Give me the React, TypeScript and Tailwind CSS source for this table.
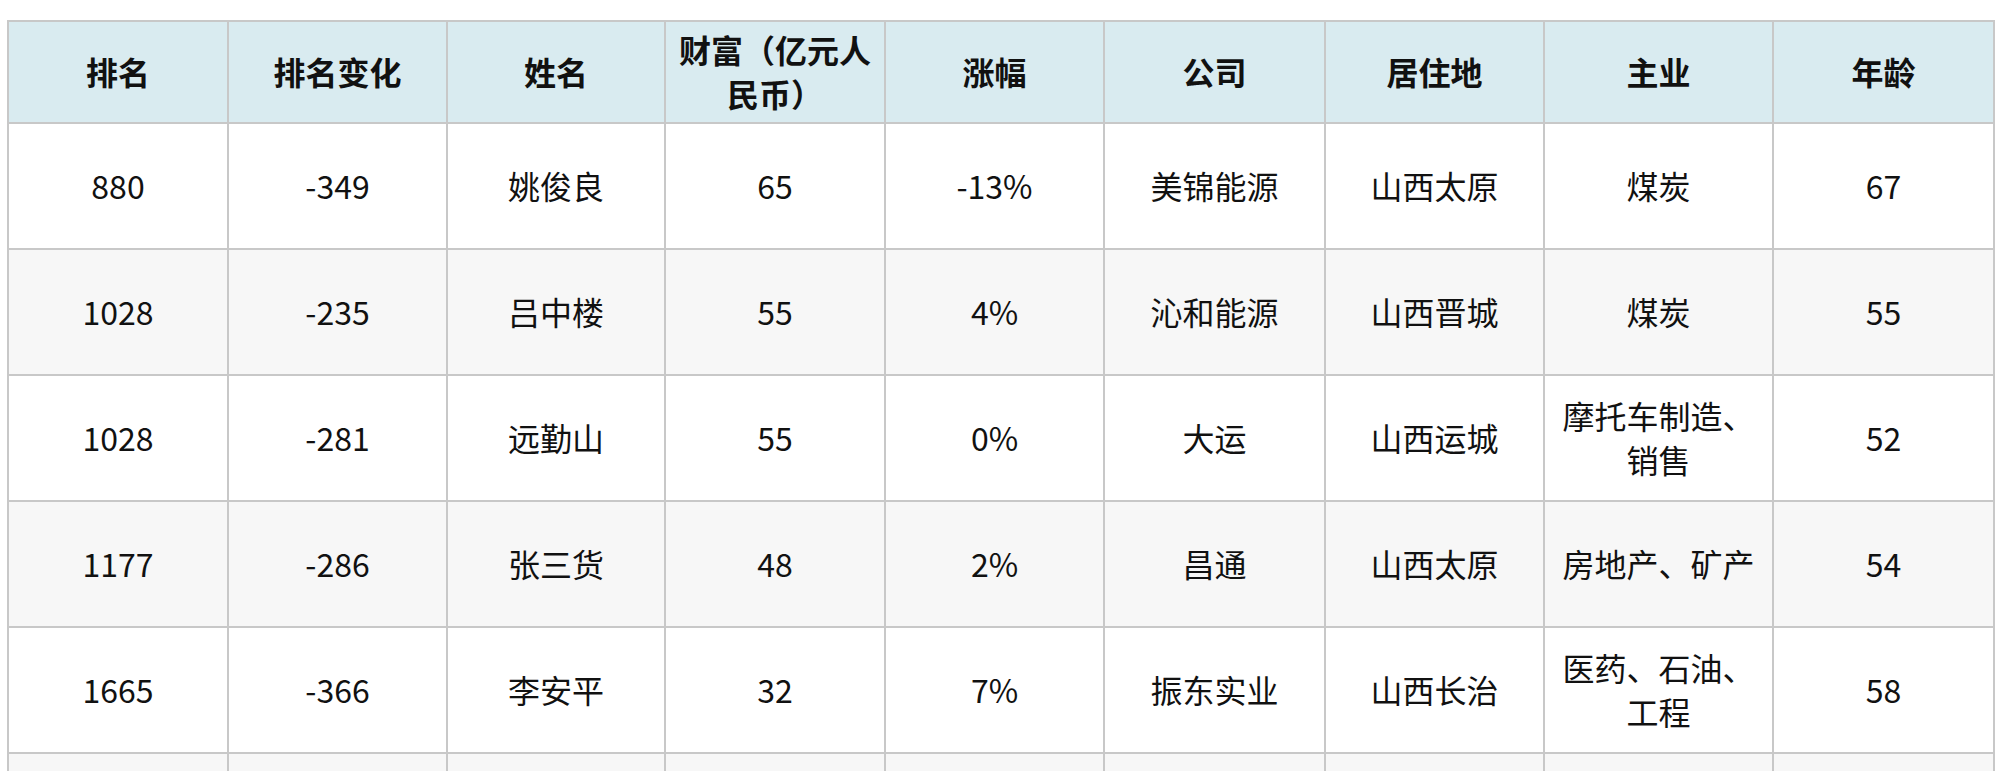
const headers = ['排名', '排名变化', '姓名', '财富（亿元人民币）', '涨幅', '公司', '居住地', '主业', '年龄'];

const colWidths = ['w-[220px]', 'w-[219px]', 'w-[218px]', 'w-[220px]', 'w-[219px]', 'w-[221px]', 'w-[219px]', 'w-[229px]', 'w-[221px]'];

const rows: string[][] = [
  ['880', '-349', '姚俊良', '65', '-13%', '美锦能源', '山西太原', '煤炭', '67'],
  ['1028', '-235', '吕中楼', '55', '4%', '沁和能源', '山西晋城', '煤炭', '55'],
  ['1028', '-281', '远勤山', '55', '0%', '大运', '山西运城', '摩托车制造、销售', '52'],
  ['1177', '-286', '张三货', '48', '2%', '昌通', '山西太原', '房地产、矿产', '54'],
  ['1665', '-366', '李安平', '32', '7%', '振东实业', '山西长治', '医药、石油、工程', '58'],
  ['', '', '', '', '', '', '', '', ''],
];

export default function App() {
  return (
    <div className="min-h-screen bg-white pl-[7px] pt-[20px] font-['Noto_Sans_CJK_SC','Noto_Sans',sans-serif] text-[#111]">
      <table className="w-[1986px] table-fixed border-collapse text-center text-[32px] leading-[1.36]">
        <colgroup>
          {colWidths.map((w, i) => (
            <col key={i} className={w} />
          ))}
        </colgroup>
        <thead>
          <tr className="bg-[#d9ebf0]">
            {headers.map((h) => (
              <th key={h} className="h-[102px] border-2 border-[#c8c8c8] px-[12px] font-bold">
                {h}
              </th>
            ))}
          </tr>
        </thead>
        <tbody>
          {rows.map((row, i) => (
            <tr key={i} className={i % 2 === 1 ? 'bg-[#f7f7f7]' : 'bg-white'}>
              {row.map((cell, j) => (
                <td key={j} className="h-[126px] border-2 border-[#c8c8c8] px-[12px] font-normal">
                  {cell}
                </td>
              ))}
            </tr>
          ))}
        </tbody>
      </table>
    </div>
  );
}
